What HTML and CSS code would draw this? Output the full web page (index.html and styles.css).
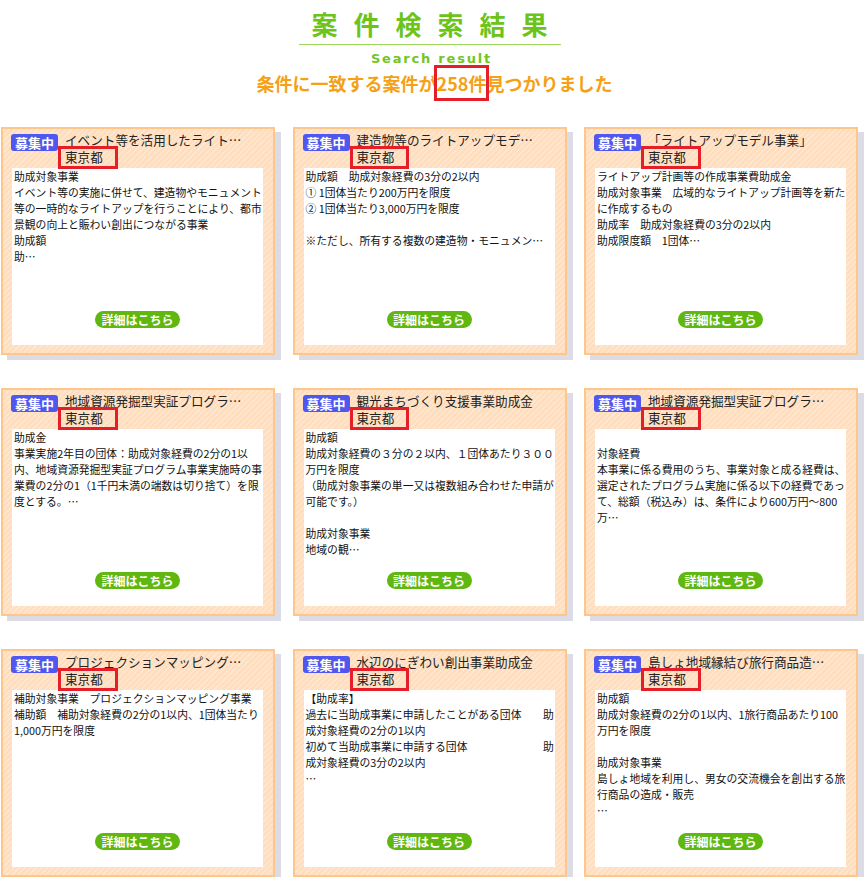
FILE: index.html
```html
<!DOCTYPE html>
<html lang="ja">
<head>
    <meta charset="UTF-8">
    <meta name="viewport" content="width=device-width, initial-scale=1.0">
    <title>案件検索結果</title>
    <link rel="stylesheet" href="styles.css">
</head>
<body>

  <div class="result-head">
    <h1 class="result-head__title"><span>案件検索結果</span></h1>
    <p class="result-head__sub">Search result</p>
    <p class="result-head__count">条件に一致する案件が<span class="mark">258件</span>見つかりました</p>
  </div>

  <div class="cards">

    <div class="card">
      <div class="card__head">
        <span class="badge">募集中</span>
        <div class="card__meta">
          <div class="card__title">イベント等を活用したライト…</div>
          <div class="card__pref"><span class="mark-pref">東京都</span></div>
        </div>
      </div>
      <div class="card__body">
        <p class="card__text">助成対象事業<br>イベント等の実施に併せて、建造物やモニュメント<br>等の一時的なライトアップを行うことにより、都市<br>景観の向上と賑わい創出につながる事業<br>助成額<br>助…</p>
        <a class="more" href="#">詳細はこちら</a>
      </div>
    </div>

    <div class="card">
      <div class="card__head">
        <span class="badge">募集中</span>
        <div class="card__meta">
          <div class="card__title">建造物等のライトアップモデ…</div>
          <div class="card__pref"><span class="mark-pref">東京都</span></div>
        </div>
      </div>
      <div class="card__body">
        <p class="card__text">助成額　助成対象経費の3分の2以内<br>① 1団体当たり200万円を限度<br>② 1団体当たり3,000万円を限度<br><br>※ただし、所有する複数の建造物・モニュメン…</p>
        <a class="more" href="#">詳細はこちら</a>
      </div>
    </div>

    <div class="card">
      <div class="card__head">
        <span class="badge">募集中</span>
        <div class="card__meta">
          <div class="card__title">「ライトアップモデル事業」</div>
          <div class="card__pref"><span class="mark-pref">東京都</span></div>
        </div>
      </div>
      <div class="card__body">
        <p class="card__text">ライトアップ計画等の作成事業費助成金<br>助成対象事業　広域的なライトアップ計画等を新た<br>に作成するもの<br>助成率　助成対象経費の3分の2以内<br>助成限度額　1団体…</p>
        <a class="more" href="#">詳細はこちら</a>
      </div>
    </div>

    <div class="card">
      <div class="card__head">
        <span class="badge">募集中</span>
        <div class="card__meta">
          <div class="card__title">地域資源発掘型実証プログラ…</div>
          <div class="card__pref"><span class="mark-pref">東京都</span></div>
        </div>
      </div>
      <div class="card__body">
        <p class="card__text">助成金<br>事業実施2年目の団体：助成対象経費の2分の1以<br>内、地域資源発掘型実証プログラム事業実施時の事<br>業費の2分の1（1千円未満の端数は切り捨て）を限<br>度とする。…</p>
        <a class="more" href="#">詳細はこちら</a>
      </div>
    </div>

    <div class="card">
      <div class="card__head">
        <span class="badge">募集中</span>
        <div class="card__meta">
          <div class="card__title">観光まちづくり支援事業助成金</div>
          <div class="card__pref"><span class="mark-pref">東京都</span></div>
        </div>
      </div>
      <div class="card__body">
        <p class="card__text">助成額<br>助成対象経費の３分の２以内、１団体あたり３００<br>万円を限度<br>（助成対象事業の単一又は複数組み合わせた申請が<br>可能です。）<br><br>助成対象事業<br>地域の観…</p>
        <a class="more" href="#">詳細はこちら</a>
      </div>
    </div>

    <div class="card">
      <div class="card__head">
        <span class="badge">募集中</span>
        <div class="card__meta">
          <div class="card__title">地域資源発掘型実証プログラ…</div>
          <div class="card__pref"><span class="mark-pref">東京都</span></div>
        </div>
      </div>
      <div class="card__body">
        <p class="card__text"><br>対象経費<br>本事業に係る費用のうち、事業対象と成る経費は、<br>選定されたプログラム実施に係る以下の経費であっ<br>て、総額（税込み）は、条件により600万円～800<br>万…</p>
        <a class="more" href="#">詳細はこちら</a>
      </div>
    </div>

    <div class="card">
      <div class="card__head">
        <span class="badge">募集中</span>
        <div class="card__meta">
          <div class="card__title">プロジェクションマッピング…</div>
          <div class="card__pref"><span class="mark-pref">東京都</span></div>
        </div>
      </div>
      <div class="card__body">
        <p class="card__text">補助対象事業　プロジェクションマッピング事業<br>補助額　補助対象経費の2分の1以内、1団体当たり<br>1,000万円を限度</p>
        <a class="more" href="#">詳細はこちら</a>
      </div>
    </div>

    <div class="card">
      <div class="card__head">
        <span class="badge">募集中</span>
        <div class="card__meta">
          <div class="card__title">水辺のにぎわい創出事業助成金</div>
          <div class="card__pref"><span class="mark-pref">東京都</span></div>
        </div>
      </div>
      <div class="card__body">
        <p class="card__text">【助成率】<br>過去に当助成事業に申請したことがある団体　　助<br>成対象経費の2分の1以内<br>初めて当助成事業に申請する団体　　　　　　　助<br>成対象経費の3分の2以内<br>…</p>
        <a class="more" href="#">詳細はこちら</a>
      </div>
    </div>

    <div class="card">
      <div class="card__head">
        <span class="badge">募集中</span>
        <div class="card__meta">
          <div class="card__title">島しょ地域縁結び旅行商品造…</div>
          <div class="card__pref"><span class="mark-pref">東京都</span></div>
        </div>
      </div>
      <div class="card__body">
        <p class="card__text">助成額<br>助成対象経費の2分の1以内、1旅行商品あたり100<br>万円を限度<br><br>助成対象事業<br>島しょ地域を利用し、男女の交流機会を創出する旅<br>行商品の造成・販売<br>…</p>
        <a class="more" href="#">詳細はこちら</a>
      </div>
    </div>

  </div>

</body>
</html>
```

FILE: styles.css
```css
*,
*::before,
*::after {
  box-sizing: border-box;
}

body {
  margin: 0;
  font-family: "Noto Sans CJK JP", "Noto Sans", sans-serif;
  color: #111;
  background: #fff;
}

/* heading block */

.result-head {
  padding: 9px 8px 0 0;
  text-align: center;
}

.result-head__title {
  width: 262px;
  margin: 0 auto;
  padding-bottom: 5px;
  font-size: 26px;
  line-height: 30px;
  font-weight: 700;
  letter-spacing: 16px;
  white-space: nowrap;
  color: #6cc41a;
  border-bottom: 1px solid #9bd65a;
}

/* cancel the trailing letter-spacing so the glyphs sit centred */
.result-head__title span {
  margin-right: -16px;
}

.result-head__sub {
  margin: 6px 0 0;
  padding-left: 4px;
  font-family: "DejaVu Sans", sans-serif;
  font-size: 13px;
  line-height: 16px;
  font-weight: 700;
  letter-spacing: 1.8px;
  color: #72c622;
}

.result-head__count {
  margin: 4px 0 0;
  padding-left: 10px;
  font-size: 18px;
  line-height: 24px;
  font-weight: 700;
  color: #f5a015;
}

.mark {
  position: relative;
  display: inline-block;
}

/* red check box drawn over the count */
.mark::after {
  content: "";
  position: absolute;
  top: -6px;
  bottom: -6px;
  left: -3px;
  right: -3px;
  border: 3px solid #e61e28;
}

/* cards */

.cards {
  display: grid;
  grid-template-columns: repeat(3, 274px);
  column-gap: 17.5px;
  row-gap: 33px;
  padding-left: 1px;
  margin-top: 32px;
}

.card {
  height: 228px;
  padding: 2px 10px 8px 9px;
  border: 2px solid #ffc68c;
  background-color: #ffe0c2;
  background-image: repeating-linear-gradient(135deg, #ffe6cd 0, #ffe6cd 1.5px, #ffdec0 1.5px, #ffdec0 4px);
  box-shadow: 6px 5px 0 #dcdce6;
}

.card__head {
  display: flex;
  height: 37px;
}

.badge {
  width: 47px;
  height: 17px;
  margin: 3px 7px 0 -1px;
  border-radius: 3px;
  background: #4f57ee;
  color: #fff;
  font-size: 13px;
  line-height: 17px;
  font-weight: 700;
  text-align: center;
}

.card__title,
.card__pref {
  font-size: 12.6px;
  line-height: 17px;
  color: #222;
  white-space: nowrap;
}

.mark-pref {
  position: relative;
  display: inline-block;
}

.mark-pref::after {
  content: "";
  position: absolute;
  top: -2px;
  bottom: -4px;
  left: -7px;
  right: -15px;
  border: 3px solid #e61e28;
}

.card__body {
  display: flex;
  flex-direction: column;
  align-items: center;
  height: 177px;
  background: #fff;
}

.card__text {
  flex: 1;
  align-self: stretch;
  margin: 0;
  padding-left: 2px;
  font-size: 10.8px;
  line-height: 16px;
  white-space: nowrap;
  overflow: hidden;
}

.more {
  width: 85px;
  height: 17px;
  margin-bottom: 17px;
  border-radius: 9px;
  background: #5fb70f;
  color: #fff;
  font-size: 12px;
  line-height: 17px;
  font-weight: 700;
  text-align: center;
  text-decoration: none;
}
```
